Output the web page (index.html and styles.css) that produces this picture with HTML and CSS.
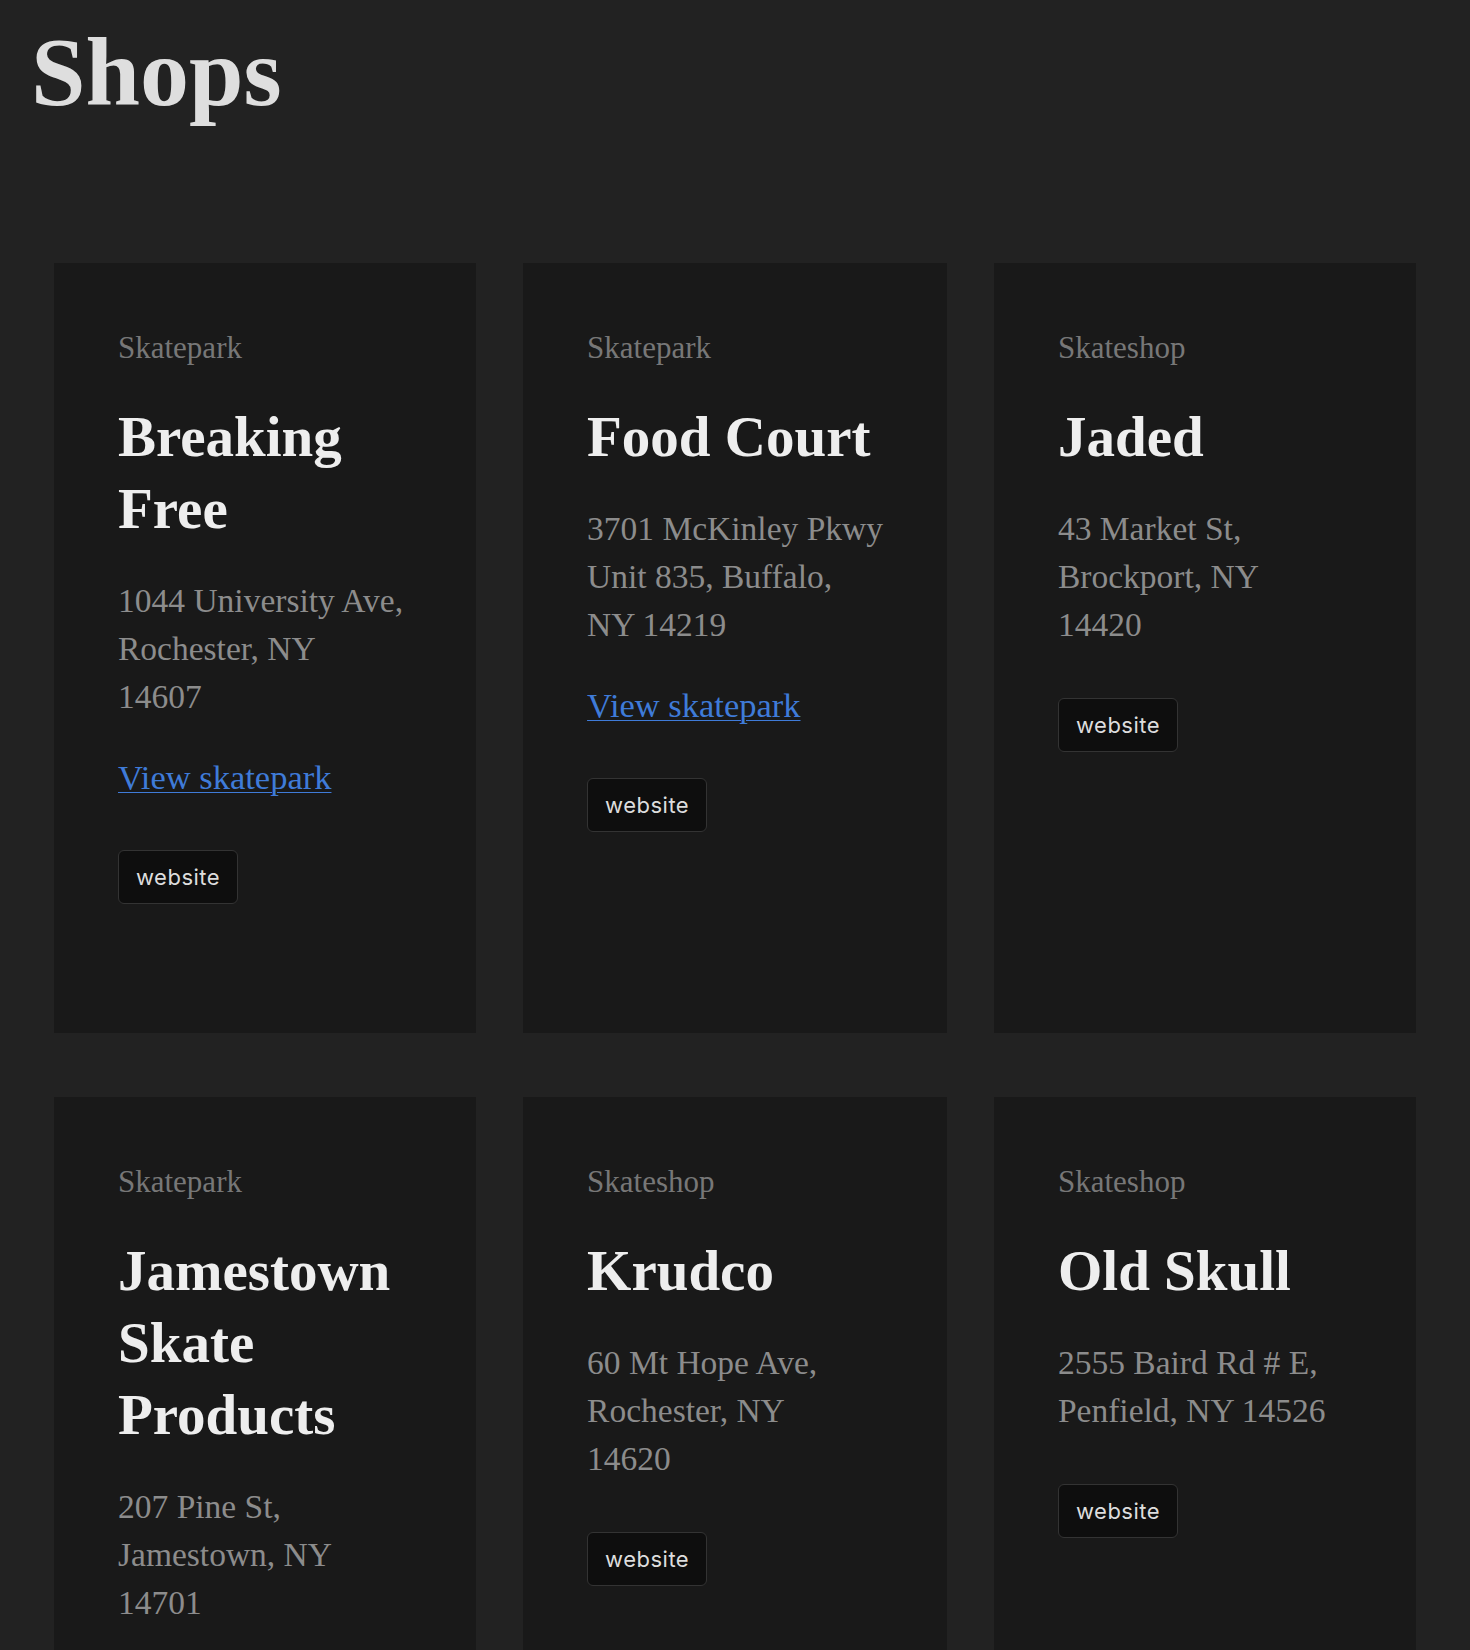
FILE: index.html
```html
<!DOCTYPE html>
<html lang="en">
<head>
  <meta charset="UTF-8">
  <meta name="viewport" content="width=device-width, initial-scale=1.0">
  <title>Shops</title>
  <link rel="stylesheet" href="styles.css">
</head>
<body>
  <h1 class="page-title">Shops</h1>
  <div class="shops">
    <div class="shop">
      <div class="shop-type">Skatepark</div>
      <h2 class="shop-name">Breaking Free</h2>
      <address>1044 University Ave,<br>Rochester, NY<br>14607</address>
      <p class="shop-link"><a href="#">View skatepark</a></p>
      <a class="website" href="#">website</a>
    </div>
    <div class="shop">
      <div class="shop-type">Skatepark</div>
      <h2 class="shop-name">Food Court</h2>
      <address>3701 McKinley Pkwy<br>Unit 835, Buffalo,<br>NY 14219</address>
      <p class="shop-link"><a href="#">View skatepark</a></p>
      <a class="website" href="#">website</a>
    </div>
    <div class="shop">
      <div class="shop-type">Skateshop</div>
      <h2 class="shop-name">Jaded</h2>
      <address>43 Market St,<br>Brockport, NY<br>14420</address>
      <a class="website" href="#">website</a>
    </div>
    <div class="shop">
      <div class="shop-type">Skatepark</div>
      <h2 class="shop-name">Jamestown Skate Products</h2>
      <address>207 Pine St,<br>Jamestown, NY<br>14701</address>
      <p class="shop-link"><a href="#">View skatepark</a></p>
      <a class="website" href="#">website</a>
    </div>
    <div class="shop">
      <div class="shop-type">Skateshop</div>
      <h2 class="shop-name">Krudco</h2>
      <address>60 Mt Hope Ave,<br>Rochester, NY<br>14620</address>
      <a class="website" href="#">website</a>
    </div>
    <div class="shop">
      <div class="shop-type">Skateshop</div>
      <h2 class="shop-name">Old Skull</h2>
      <address>2555 Baird Rd # E,<br>Penfield, NY 14526</address>
      <a class="website" href="#">website</a>
    </div>
  </div>
</body>
</html>
```

FILE: styles.css
```css
body {
  margin: 0;
  padding: 0;
  background: #222;
  font-family: "Liberation Serif", "Times New Roman", serif;
}
.page-title {
  margin: 16px 31px 0 31px;
  color: #dedede;
  font-size: 98px;
  line-height: 112px;
  font-weight: bold;
}
.shops {
  display: grid;
  grid-template-columns: repeat(3, 1fr);
  column-gap: 47px;
  row-gap: 64px;
  margin: 135px 54px 64px 54px;
}
.shop {
  background: #191919;
  padding: 64px 64px 129px 64px;
  display: flex;
  flex-direction: column;
  align-items: flex-start;
}
.shop-type {
  color: #777;
  font-size: 31px;
  line-height: 42px;
  margin-bottom: 32px;
}
.shop-name {
  margin: 0 0 32px 0;
  color: #eee;
  font-size: 57px;
  line-height: 72px;
  font-weight: bold;
}
address {
  font-style: normal;
  color: #8c8c8c;
  font-size: 33.5px;
  line-height: 48px;
  white-space: nowrap;
}
.shop-link {
  margin: 32px 0 0 0;
  font-size: 34.5px;
  line-height: 48px;
}
.shop-link a {
  color: #3f7bd8;
  text-underline-offset: 3px;
  text-decoration-thickness: 1px;
}
.website {
  margin-top: 49px;
  display: inline-block;
  padding: 0 17px;
  height: 52px;
  line-height: 52px;
  border: 1px solid #333;
  border-radius: 6px;
  background: #0e0e0e;
  color: #ddd;
  font-family: Inter, "Noto Sans", sans-serif;
  font-size: 22px;
  letter-spacing: 0.5px;
  text-decoration: none;
}
```
